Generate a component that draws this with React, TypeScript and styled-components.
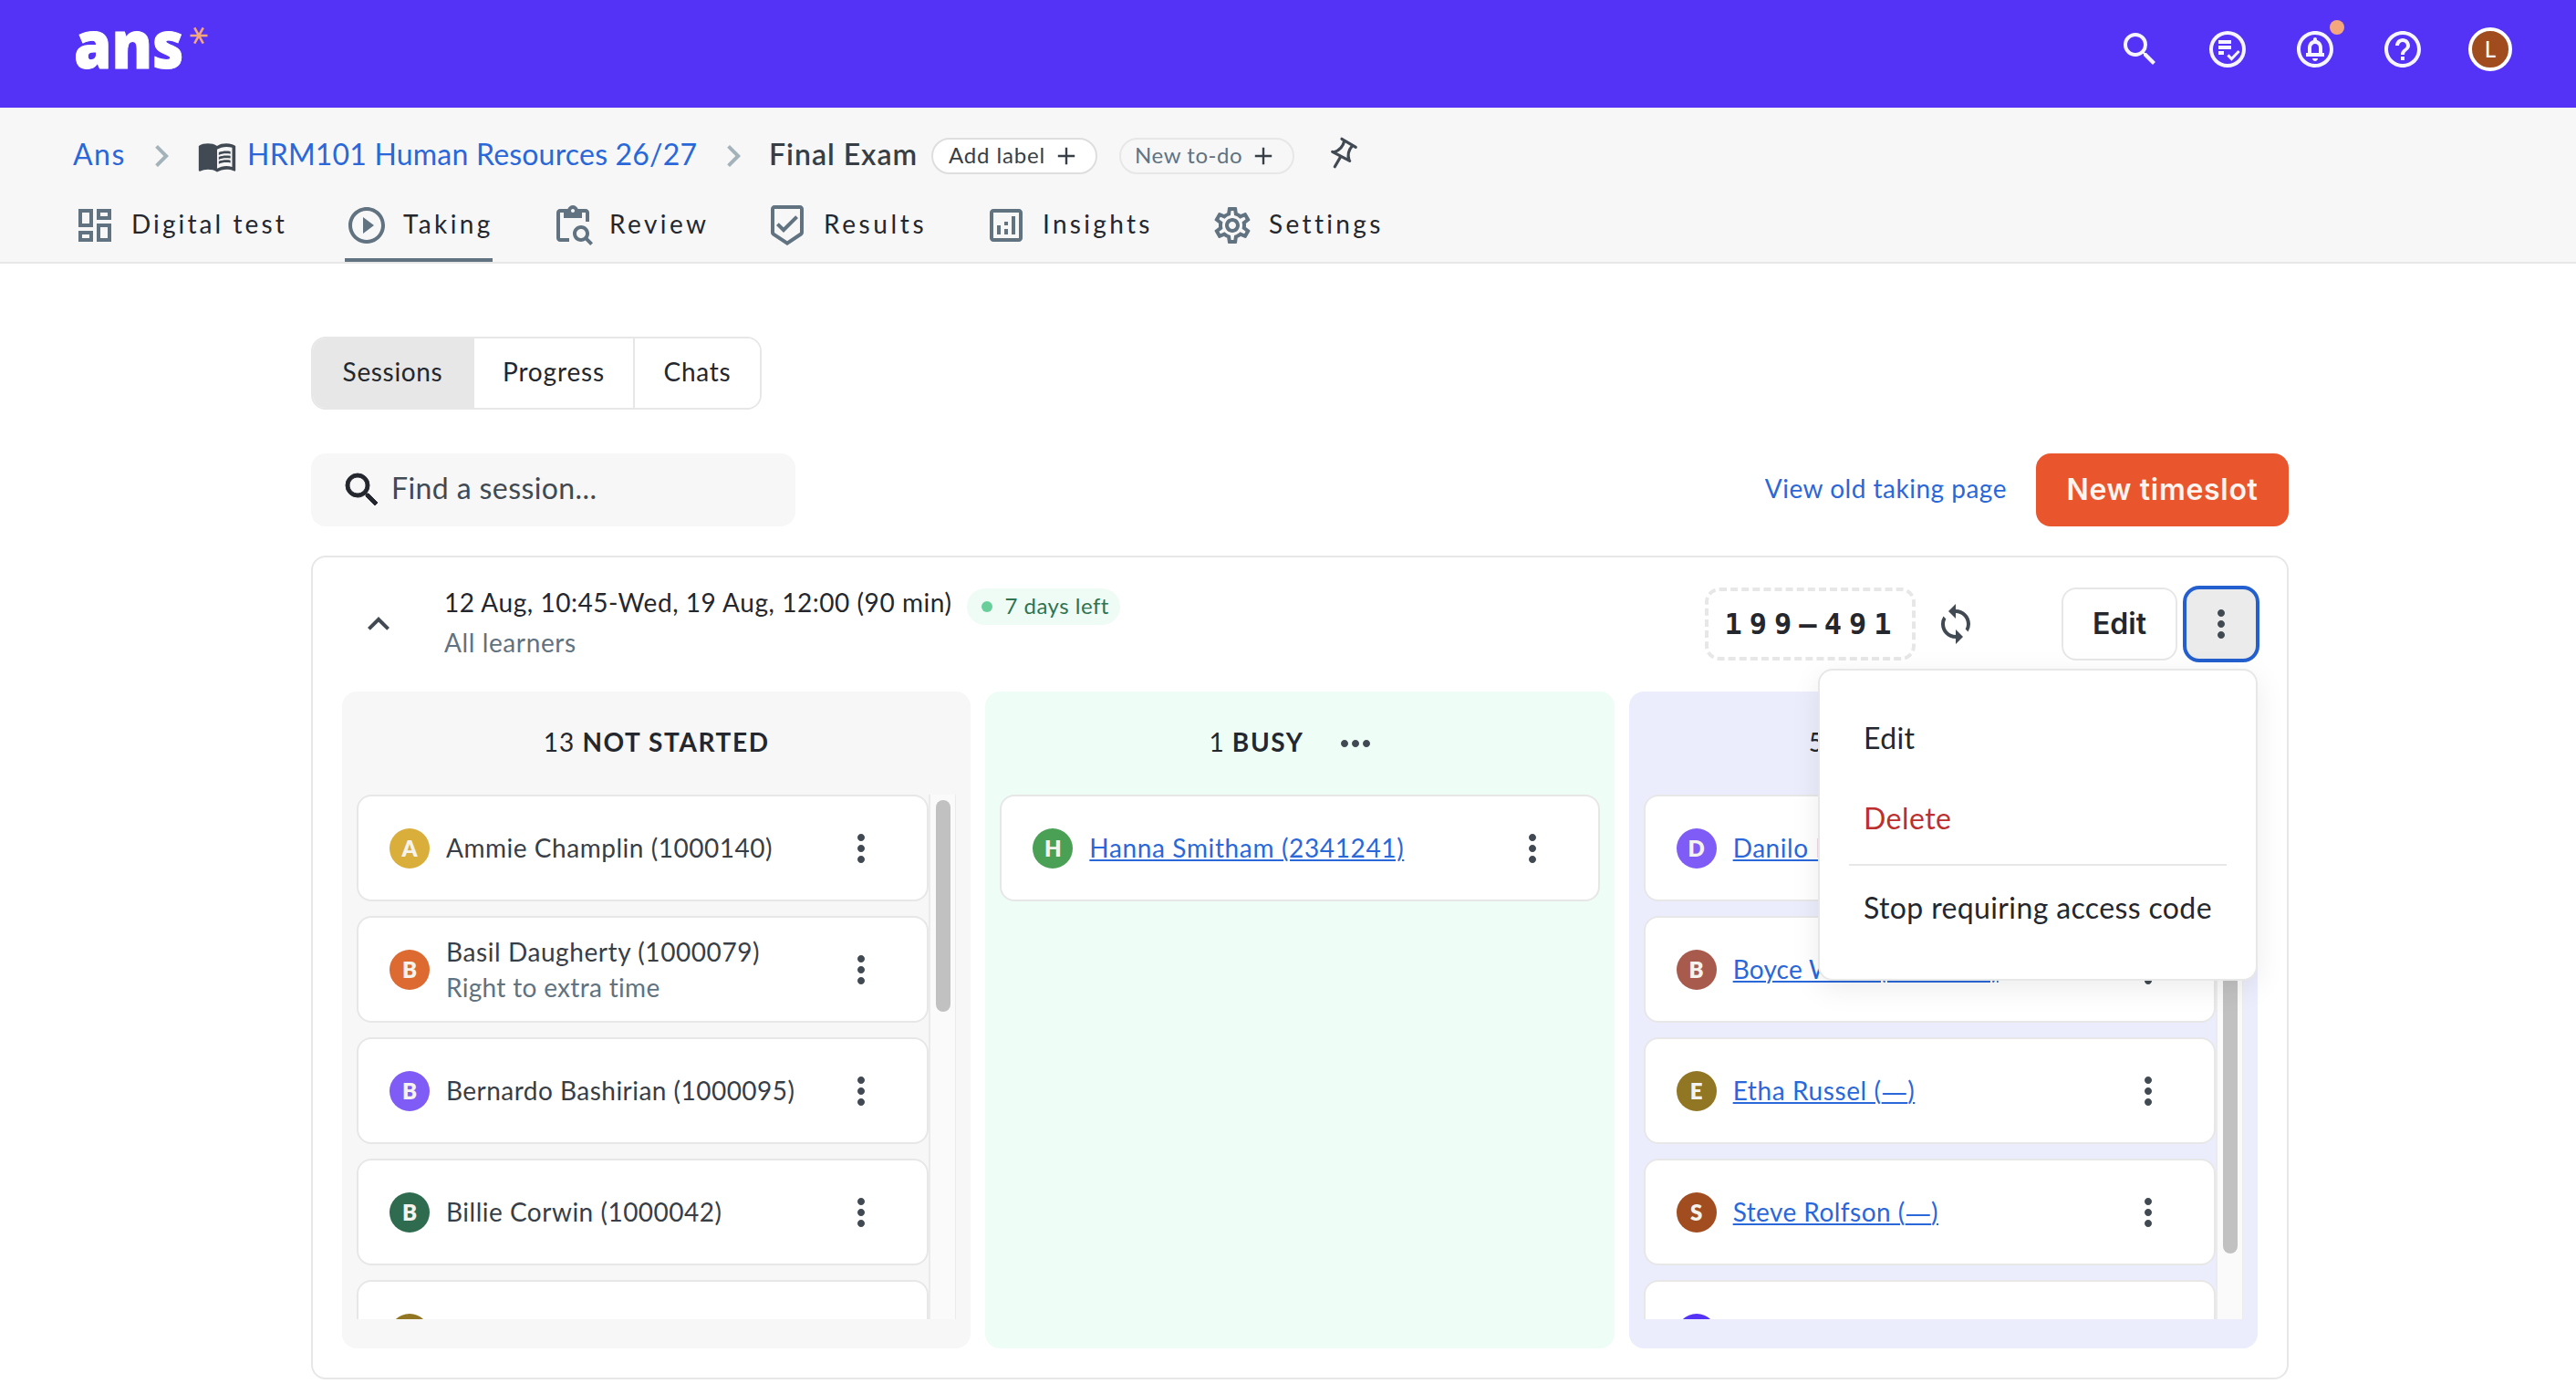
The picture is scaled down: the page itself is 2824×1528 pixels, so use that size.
import React from 'react';
import styled, { createGlobalStyle } from 'styled-components';
import {
  MdSearch,
  MdOutlineCircleNotifications,
  MdHelpOutline,
  MdChevronRight,
  MdMenuBook,
  MdOutlineDashboard,
  MdPlayCircleOutline,
  MdContentPasteSearch,
  MdOutlineBeenhere,
  MdOutlineAnalytics,
  MdOutlineSettings,
  MdExpandLess,
  MdSync,
  MdMoreVert,
  MdMoreHoriz,
} from 'react-icons/md';

const color = {
  brand: '#5433f7',
  ink: '#24272e',
  body: '#383e46',
  icon: '#414952',
  slate: '#617280',
  link: '#2a67d9',
  line: '#e7e7e7',
  soft: '#f7f7f7',
};

const GlobalStyle = createGlobalStyle`
  *, *::before, *::after { box-sizing: border-box; }
  body {
    margin: 0;
    background: #fff;
    color: ${color.ink};
    font-family: Lato, "Noto Sans", sans-serif;
  }
  svg { display: block; flex: none; }
`;

/* ---------- text ---------- */

const Text = styled.span<{
  $size?: number;
  $track?: number;
  $weight?: number;
  $color?: string;
}>`
  display: block;
  flex: none;
  padding-bottom: 0.12em;
  white-space: pre;
  line-height: 1.3;
  font-size: ${(p) => p.$size ?? 28}px;
  font-weight: ${(p) => p.$weight ?? 400};
  letter-spacing: ${(p) => p.$track ?? 0.55}px;
  color: ${(p) => p.$color ?? 'inherit'};
`;

const ButtonText = styled(Text)`
  font-family: Inter, sans-serif;
  padding-bottom: 0;
`;

/* ---------- top bar ---------- */

const TopBar = styled.header`
  display: flex;
  justify-content: space-between;
  height: 118px;
  padding: 0 70px 0 81px;
  background: ${color.brand};
  color: #f6f4ff;
`;

const Logo = styled.div`
  display: flex;
  align-items: flex-start;
`;

const Wordmark = styled.span`
  width: 127px;
  margin-top: 11px;
  font: 800 72px/72px 'Open Sans', sans-serif;
  color: #fff;
  -webkit-text-stroke: 1px #fff;
  transform: scaleX(0.925);
  transform-origin: left;
`;

const Asterisk = styled.svg`
  width: 20px;
  height: 20px;
  margin-top: 29px;
`;

const TopActions = styled.nav`
  display: flex;
  gap: 48px;
  height: 108px;
  align-items: center;
`;

const ActionIcon = styled.span`
  position: relative;
  width: 48px;
  height: 48px;
`;

const Dot = styled.i`
  position: absolute;
  top: -8px;
  right: -8px;
  width: 16px;
  height: 16px;
  border-radius: 50%;
  background: #f4a67c;
`;

const UserAvatar = styled.span`
  display: grid;
  place-items: center;
  width: 48px;
  height: 48px;
  border: 4px solid #fff;
  border-radius: 50%;
  background: #a14c1f;
  font-size: 24px;
  font-weight: 500;
  line-height: 1;
`;

/* ---------- sub header ---------- */

const SubHeader = styled.section`
  display: flex;
  flex-direction: column;
  height: 171px;
  padding: 29px 80px 0;
  border-bottom: 2px solid ${color.line};
  background: ${color.soft};
`;

const Breadcrumb = styled.div`
  display: flex;
  align-items: center;
  height: 48px;
  color: ${color.link};
`;

const Crumb = styled(Text)<{ $w: number }>`
  width: ${(p) => p.$w}px;
`;

const Separator = styled(MdChevronRight)`
  color: #a4b2ba;
  margin-right: 15px;
`;

const BookIcon = styled(MdMenuBook)`
  color: ${color.icon};
  margin-right: 11px;
`;

const Chip = styled.button<{ $quiet?: boolean; $w: number }>`
  display: flex;
  align-items: center;
  justify-content: space-between;
  width: ${(p) => p.$w}px;
  height: 40px;
  margin-right: 24px;
  padding: 0 22px 0 ${(p) => (p.$quiet ? 15 : 17)}px;
  border: 2px solid ${(p) => (p.$quiet ? '#e7e7e7' : '#dedede')};
  border-radius: 20px;
  background: ${(p) => (p.$quiet ? 'transparent' : '#fff')};
  font-family: inherit;
  color: ${(p) => (p.$quiet ? color.slate : color.body)};
  svg {
    color: ${color.body};
  }
`;

const PinSvg = styled.svg`
  width: 40px;
  height: 40px;
  margin: 0 0 8px 12px;
`;

const Tabs = styled.nav`
  display: flex;
  gap: 64px;
  margin-top: 28px;
`;

const Tab = styled.a<{ $active?: boolean; $w: number }>`
  display: flex;
  gap: 16px;
  align-items: center;
  width: ${(p) => p.$w}px;
  height: 64px;
  padding-bottom: 12px;
  border-bottom: 4px solid ${(p) => (p.$active ? color.slate : 'transparent')};
  svg {
    color: ${color.slate};
  }
`;

/* ---------- page ---------- */

const Page = styled.main`
  width: 2168px;
  margin: 80px 0 0 341px;
`;

const Segments = styled.div`
  display: inline-flex;
  height: 80px;
  border: 2px solid ${color.line};
  border-radius: 16px;
  overflow: hidden;
`;

const Segment = styled.button<{ $active?: boolean; $w: number }>`
  display: grid;
  place-items: center;
  width: ${(p) => p.$w}px;
  border: 0;
  border-right: 2px solid ${color.line};
  background: ${(p) => (p.$active ? color.line : '#fff')};
  color: ${color.ink};
  font-family: inherit;
  &:last-child {
    border-right: 0;
  }
`;

const Toolbar = styled.div`
  display: flex;
  align-items: center;
  height: 80px;
  margin-top: 48px;
`;

const SearchBox = styled.label`
  display: flex;
  align-items: center;
  gap: 8px;
  width: 531px;
  height: 80px;
  margin-right: auto;
  padding-left: 32px;
  border-radius: 16px;
  background: ${color.soft};
  svg {
    color: ${color.ink};
  }
  path:not([fill='none']) {
    stroke: ${color.ink};
    stroke-width: 0.5;
  }
`;

const PrimaryButton = styled.button`
  display: grid;
  place-items: center;
  width: 277px;
  height: 80px;
  margin-left: 32px;
  border: 0;
  border-radius: 16px;
  background: #e9562d;
  color: #fdf4ef;
`;

const SessionCard = styled.section`
  height: 903px;
  margin-top: 32px;
  padding: 31px 32px 32px;
  border: 2px solid ${color.line};
  border-radius: 16px;
`;

const SessionHead = styled.div`
  display: flex;
  align-items: center;
  height: 84px;
  margin-right: -2px;
  padding-left: 16px;
  color: ${color.icon};
`;

const SessionInfo = styled.div`
  display: flex;
  flex-direction: column;
  gap: 2px;
  margin: 0 auto 0 48px;
`;

const TitleRow = styled.div`
  display: flex;
  align-items: flex-start;
  height: 42px;
  gap: 17px;
`;

const Badge = styled.span`
  display: flex;
  align-items: center;
  gap: 13px;
  width: 168px;
  height: 40px;
  margin-top: 3px;
  padding-left: 16px;
  border-radius: 20px;
  background: #effcf6;
  color: #2f7351;
  &::before {
    content: '';
    width: 12px;
    height: 12px;
    border-radius: 50%;
    background: #68cf9b;
  }
`;

const AccessCode = styled.code`
  display: grid;
  place-items: center;
  width: 231px;
  height: 80px;
  margin-right: 20px;
  padding-left: 3px;
  border: 4px dashed ${color.line};
  border-radius: 16px;
  font: 700 32px 'DejaVu Sans Mono', monospace;
  letter-spacing: 8px;
  color: ${color.ink};
`;

const OutlineButton = styled.button`
  display: grid;
  place-items: center;
  width: 127px;
  height: 80px;
  margin: 0 6px 0 92px;
  border: 2px solid ${color.line};
  border-radius: 16px;
  background: #fff;
  color: ${color.ink};
`;

const MenuAnchor = styled.div`
  position: relative;
`;

const KebabButton = styled.button`
  display: grid;
  place-items: center;
  width: 84px;
  height: 84px;
  padding: 0;
  border: 4px solid #245fcf;
  border-radius: 18px;
  background: #ebebeb;
  color: ${color.icon};
`;

const Menu = styled.div`
  position: absolute;
  z-index: 2;
  top: 91px;
  right: 2px;
  width: 482px;
  padding: 32px;
  border: 2px solid ${color.line};
  border-radius: 16px;
  background: #fff;
  box-shadow: 0 8px 32px rgba(0, 0, 0, 0.08);
`;

const MenuItem = styled.div<{ $danger?: boolean }>`
  display: flex;
  align-items: center;
  height: 88px;
  padding-left: 16px;
  color: ${(p) => (p.$danger ? '#bb302f' : color.ink)};
`;

const Divider = styled.hr`
  height: 2px;
  margin: 4px 0;
  border: 0;
  background: ${color.line};
`;

/* ---------- columns ---------- */

const Columns = styled.div`
  display: grid;
  grid-template-columns: repeat(3, 1fr);
  gap: 16px;
  margin-top: 32px;
`;

const Column = styled.div<{ $bg: string }>`
  height: 720px;
  padding: 0 16px;
  border-radius: 16px;
  background: ${(p) => p.$bg};
`;

const ColumnHead = styled.div`
  display: flex;
  align-items: center;
  justify-content: center;
  height: 113px;
  svg {
    margin: 0 15px 0 32px;
    color: ${color.icon};
  }
`;

const Scroller = styled.div`
  display: flex;
  height: 575px;
  overflow: hidden;
`;

const List = styled.div`
  display: flex;
  flex: 1;
  flex-direction: column;
  gap: 16px;
`;

const Track = styled.div`
  width: 30px;
  padding: 6px 0 0 6px;
  border: solid #ebebeb;
  border-width: 0 1px 0 2px;
  background: #fafafa;
`;

const Thumb = styled.div<{ $h: number }>`
  width: 16px;
  height: ${(p) => p.$h}px;
  border-radius: 8px;
  background: #c1c1c1;
`;

const PersonCard = styled.article`
  display: flex;
  flex: none;
  align-items: center;
  height: 117px;
  padding: 0 48px 0 34px;
  border: 2px solid ${color.line};
  border-radius: 16px;
  background: #fff;
  color: ${color.icon};
`;

const Avatar = styled.span<{ $bg: string }>`
  display: grid;
  place-items: center;
  width: 44px;
  height: 44px;
  margin-right: 18px;
  border-radius: 50%;
  background: ${(p) => p.$bg};
  color: #f5f3ee;
  font-size: 24px;
  font-weight: 800;
  line-height: 1;
`;

const PersonText = styled.div`
  margin-right: auto;
  color: ${color.body};
`;

const PersonLine = styled(Text)<{ $link?: boolean }>`
  line-height: 40px;
  padding: 0;
  margin-top: ${(p) => (p.$link ? -2 : -1)}px;
  ${(p) =>
    p.$link &&
    `color: ${color.link};
     text-decoration: underline;
     text-decoration-thickness: 2px;
     text-underline-offset: 2px;`}
`;

const Dash = styled.span`
  font-family: 'Open Sans', sans-serif;
`;

/* ---------- icons ---------- */

const PlusIcon = () => (
  <svg width="20" height="20" viewBox="0 0 20 20" stroke="currentColor" strokeWidth="2.4">
    <path d="M10 .8v18.4M.8 10h18.4" />
  </svg>
);

const PinIcon = () => (
  <PinSvg viewBox="0 0 40 40" fill="none" stroke={color.icon} strokeWidth="3.2" strokeLinecap="round" strokeLinejoin="round">
    <path d="M16 5.3 31.3 14.3M5.7 19.3 24.7 29.3M14.7 24.7 8.3 35.7M18.8 7.3C17.5 13 14 17.5 7.5 19.8M27.5 12.8C23 18 22 23 24 28.5" />
  </PinSvg>
);

const TodoIcon = () => (
  <svg width="48" height="48" viewBox="0 0 24 24" fill="currentColor">
    <path
      fillRule="evenodd"
      d="M12 2a10 10 0 1 0 0 20 10 10 0 0 0 0-20Zm0 18a8 8 0 1 1 0-16 8 8 0 0 1 0 16Z"
    />
    <path d="M7 7h7v2H7zM7 10h7v2H7zM7 13h3v2H7z" />
    <path d="m12.2 15.2 2 2.1 4.1-4.3" fill="none" stroke="currentColor" strokeWidth="1.5" />
  </svg>
);

/* ---------- data ---------- */

type Person = { name: string; track?: number; note?: string; bg: string; link?: boolean };

const notStarted: Person[] = [
  { name: 'Ammie Champlin (1000140)', track: 0.53, bg: '#d9ae3b' },
  { name: 'Basil Daugherty (1000079)', track: 0.58, note: 'Right to extra time', bg: '#dc6a31' },
  { name: 'Bernardo Bashirian (1000095)', track: 0.47, bg: '#7f5cf5' },
  { name: 'Billie Corwin (1000042)', track: 0.5, bg: '#2f6b4e' },
  { name: 'Camila Dach (1000051)', bg: '#937623' },
];
const busy: Person[] = [{ name: 'Hanna Smitham (2341241)', track: 0.64, bg: '#4aa156', link: true }];
const submitted: Person[] = [
  { name: 'Danilo Kuhn (1000012)', bg: '#7f5cf5', link: true },
  { name: 'Boyce Wolff (1000063)', track: 0.2, bg: '#a85a4d', link: true },
  { name: 'Etha Russel (—)', track: 0.6, bg: '#917624', link: true },
  { name: 'Steve Rolfson (—)', track: 0.45, bg: '#a24d20', link: true },
  { name: 'Tom Wiza (—)', bg: '#5433f7', link: true },
];

const PersonName = ({ name }: { name: string }) => {
  const [before, after] = name.split('—');
  if (after === undefined) return <>{name}</>;
  return (
    <>
      {before}
      <Dash>—</Dash>
      {after}
    </>
  );
};

const People = ({ people }: { people: Person[] }) => (
  <List>
    {people.map((p) => (
      <PersonCard key={p.name}>
        <Avatar $bg={p.bg}>{p.name[0]}</Avatar>
        <PersonText>
          <PersonLine $track={p.track} $link={p.link}>
            <PersonName name={p.name} />
          </PersonLine>
          {p.note && (
            <PersonLine $track={0.32} $color={color.slate}>
              {p.note}
            </PersonLine>
          )}
        </PersonText>
        <MdMoreVert size={48} />
      </PersonCard>
    ))}
  </List>
);

const ColumnTitle = ({ count, label }: { count: number; label: string }) => (
  <>
    <Text $track={1}>{count} </Text>
    <Text $weight={700} $track={1.6}>
      {label}
    </Text>
  </>
);

const tabs = [
  { label: 'Digital test', Icon: MdOutlineDashboard, track: 3.1, w: 234 },
  { label: 'Taking', Icon: MdPlayCircleOutline, track: 3.4, w: 162, active: true },
  { label: 'Review', Icon: MdContentPasteSearch, track: 3.4, w: 171 },
  { label: 'Results', Icon: MdOutlineBeenhere, track: 3.6, w: 176 },
  { label: 'Insights', Icon: MdOutlineAnalytics, track: 3.3, w: 184 },
  { label: 'Settings', Icon: MdOutlineSettings, track: 3.35, w: 190 },
];

export default function App() {
  return (
    <>
      <GlobalStyle />
      <TopBar>
        <Logo>
          <Wordmark>ans</Wordmark>
          <Asterisk viewBox="0 0 20 20" stroke="#f4a67c" strokeWidth="2.6">
            <path d="M.5 10h19M5.2 1.3 14.8 18.7M14.8 1.3 5.2 18.7" />
          </Asterisk>
        </Logo>
        <TopActions>
          <MdSearch size={48} />
          <TodoIcon />
          <ActionIcon>
            <MdOutlineCircleNotifications size={48} />
            <Dot />
          </ActionIcon>
          <MdHelpOutline size={48} />
          <UserAvatar>L</UserAvatar>
        </TopActions>
      </TopBar>

      <SubHeader>
        <Breadcrumb>
          <Crumb $w={73} $size={32} $track={1.5}>Ans</Crumb>
          <Separator size={48} />
          <BookIcon size={44} />
          <Crumb $w={509} $size={32} $track={0.2}>HRM101 Human Resources 26/27</Crumb>
          <Separator size={48} />
          <Crumb $w={178} $size={32} $weight={600} $track={0.99} $color={color.body}>Final Exam</Crumb>
          <Chip $w={182}>
            <Text $size={24} $track={0.85}>Add label</Text>
            <PlusIcon />
          </Chip>
          <Chip $w={192} $quiet>
            <Text $size={24} $track={0.57}>New to-do</Text>
            <PlusIcon />
          </Chip>
          <PinIcon />
        </Breadcrumb>
        <Tabs>
          {tabs.map(({ label, Icon, track, w, active }) => (
            <Tab key={label} $w={w} $active={active}>
              <Icon size={48} />
              <Text $track={track}>{label}</Text>
            </Tab>
          ))}
        </Tabs>
      </SubHeader>

      <Page>
        <Segments>
          <Segment $w={177} $active><Text $track={0.66}>Sessions</Text></Segment>
          <Segment $w={176}><Text $track={0.85}>Progress</Text></Segment>
          <Segment $w={137}><Text $track={0.73}>Chats</Text></Segment>
        </Segments>

        <Toolbar>
          <SearchBox>
            <MdSearch size={48} />
            <Text $size={32} $track={0.4} $color={color.icon}>Find a session...</Text>
          </SearchBox>
          <Text $track={0.5} $color={color.link}>View old taking page</Text>
          <PrimaryButton>
            <ButtonText $size={32} $weight={600} $track={0.7}>New timeslot</ButtonText>
          </PrimaryButton>
        </Toolbar>

        <SessionCard>
          <SessionHead>
            <MdExpandLess size={48} />
            <SessionInfo>
              <TitleRow>
                <Text $color={color.ink}>12 Aug, 10:45-Wed, 19 Aug, 12:00 (90 min)</Text>
                <Badge>
                  <Text $size={24} $track={0.49}>7 days left</Text>
                </Badge>
              </TitleRow>
              <Text $track={0.61} $color={color.slate}>All learners</Text>
            </SessionInfo>
            <AccessCode>199–491</AccessCode>
            <MdSync size={48} />
            <OutlineButton>
              <ButtonText $size={32} $weight={600} $track={0}>Edit</ButtonText>
            </OutlineButton>
            <MenuAnchor>
              <KebabButton><MdMoreVert size={48} /></KebabButton>
              <Menu>
                <MenuItem><Text $size={32} $track={0.36}>Edit</Text></MenuItem>
                <MenuItem $danger><Text $size={32} $track={0.45}>Delete</Text></MenuItem>
                <Divider />
                <MenuItem><Text $size={32} $track={0.37}>Stop requiring access code</Text></MenuItem>
              </Menu>
            </MenuAnchor>
          </SessionHead>

          <Columns>
            <Column $bg="#f7f7f7">
              <ColumnHead><ColumnTitle count={13} label="NOT STARTED" /></ColumnHead>
              <Scroller>
                <People people={notStarted} />
                <Track><Thumb $h={232} /></Track>
              </Scroller>
            </Column>
            <Column $bg="#effdf7">
              <ColumnHead><ColumnTitle count={1} label="BUSY" /><MdMoreHoriz size={48} /></ColumnHead>
              <Scroller><People people={busy} /></Scroller>
            </Column>
            <Column $bg="#ebedfd">
              <ColumnHead><ColumnTitle count={5} label="SUBMITTED" /><MdMoreHoriz size={48} /></ColumnHead>
              <Scroller>
                <People people={submitted} />
                <Track><Thumb $h={497} /></Track>
              </Scroller>
            </Column>
          </Columns>
        </SessionCard>
      </Page>
    </>
  );
}
